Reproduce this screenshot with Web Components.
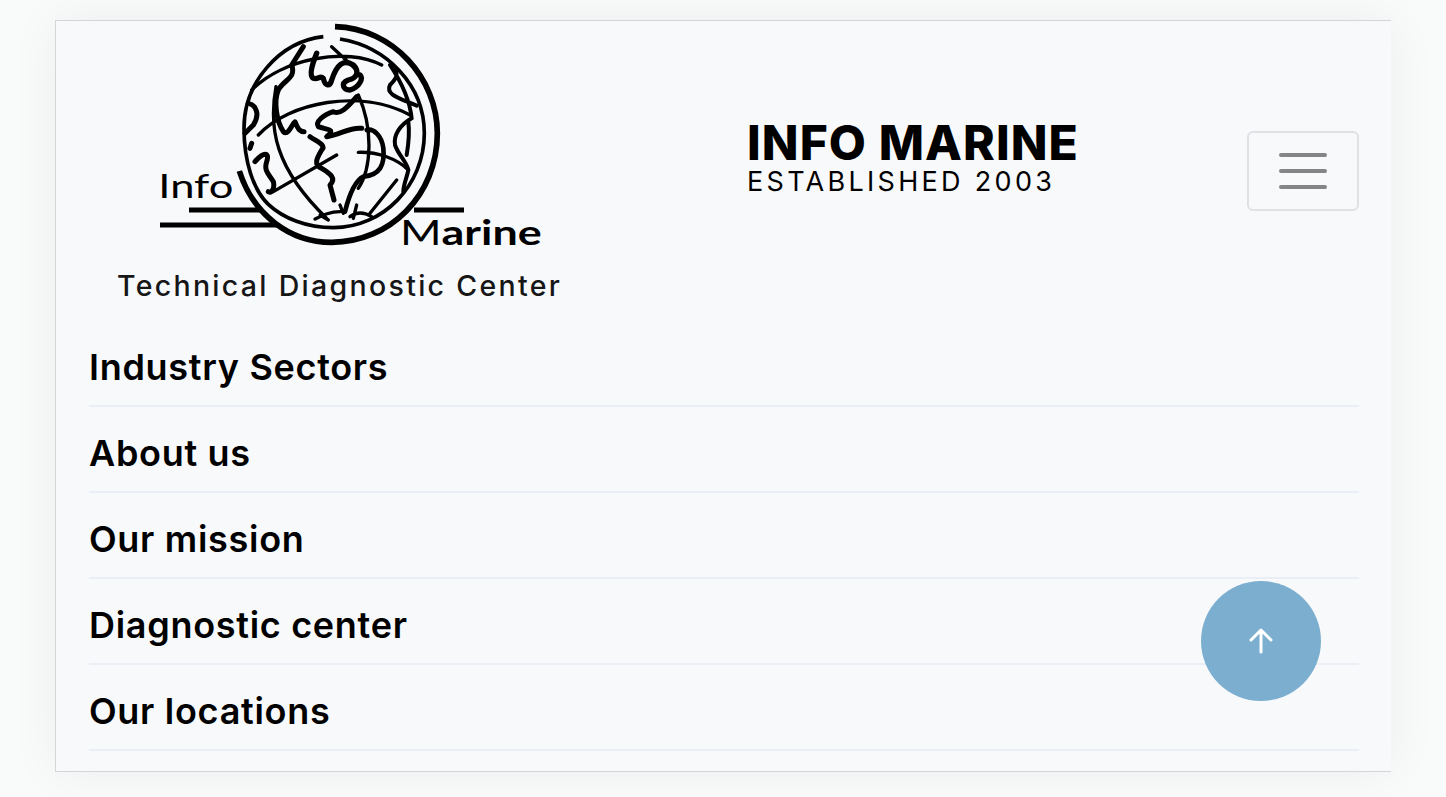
<!DOCTYPE html>
<html lang="en">
<head>
<meta charset="utf-8">
<title>Info Marine</title>
<style>
html,body{margin:0;height:797px;overflow:hidden;background:#f9fbfa;font-family:"Inter","Liberation Sans",sans-serif;color:#000}
</style>
</head>
<body>
<im-page>
  <im-header>
    <im-logo slot="logo">Technical Diagnostic Center</im-logo>
    <im-title slot="title" sub="ESTABLISHED 2003">INFO MARINE</im-title>
    <im-toggler slot="toggler"></im-toggler>
  </im-header>
  <im-nav-item>Industry Sectors</im-nav-item>
  <im-nav-item>About us</im-nav-item>
  <im-nav-item>Our mission</im-nav-item>
  <im-nav-item>Diagnostic center</im-nav-item>
  <im-nav-item>Our locations</im-nav-item>
  <im-scroll-top></im-scroll-top>
</im-page>
<script>
function def(name, html, init){
  customElements.define(name, class extends HTMLElement{
    constructor(){super();this.attachShadow({mode:'open'}).innerHTML=html;}
    connectedCallback(){ if(init) init(this); }
  });
}
def('im-page',`<style>
:host{display:block;position:relative;box-sizing:border-box;width:1336px;height:752px;margin:20px 0 0 55px;
background:#f8f9fb;border:1px solid #d3d5d6;border-right:0;padding:0 32px 0 33px;box-shadow:0 0 48px rgba(0,0,0,.055)}
</style><slot></slot>`);
def('im-header',`<style>
:host{display:grid;grid-template-columns:658px 1fr auto;height:300px;align-items:center}
.t{padding-bottom:24px}
</style><slot name="logo"></slot><div class="t"><slot name="title"></slot></div><slot name="toggler"></slot>`);
def('im-logo',`<style>
:host{display:flex;flex-direction:column;height:300px;align-items:flex-start}
svg{display:block;margin-left:51px;width:420px;height:240px;flex:none}
.cap{margin-left:28px;width:444px;font:500 28.5px/50px "Inter","Liberation Sans",sans-serif;letter-spacing:2.3px;color:#161616;white-space:nowrap}
text{font-family:"Lato","Liberation Sans",sans-serif;fill:#000}
</style>
<svg viewBox="0 18 1260 720" fill="none" stroke="#000" stroke-linecap="round" stroke-linejoin="round" aria-label="Info Marine logo">
  <path stroke-width="17" stroke-linecap="butt" d="M585 35C760 40 892 190 892 355C892 540 750 682 575 682C450 682 340 600 298 468"/>
  <path stroke-width="11" stroke-linecap="butt" d="M600 72C740 95 853 210 853 355C853 510 730 638 580 638C500 638 430 610 385 568C340 525 312 440 312 340C312 200 420 80 550 65"/>
  <path stroke-width="15" stroke-linecap="butt" d="M147 585H362M822 585H972M60 630H412"/>
  <path stroke-width="10" d="M335 225C430 130 620 95 725 150M355 360C450 260 660 220 810 300M400 530L590 420M655 412C710 410 770 430 805 465M408 215C385 340 405 460 560 610M655 240C700 340 695 460 655 520M770 495L690 595M575 95L650 165"/>
  <path stroke-width="15" d="M490 95L455 150C470 190 430 195 415 225C400 260 410 320 430 350C445 365 460 320 465 320C475 345 480 350 492 350"/>
  <path stroke-width="16" d="M530 115C520 140 505 180 520 190C535 195 540 180 550 190C555 215 570 215 575 195C590 150 610 130 640 150C660 170 650 190 625 195C600 205 610 225 630 225C660 215 670 190 660 180"/>
  <path stroke-width="15" d="M650 245C620 280 600 300 580 290C550 300 525 320 535 335C560 345 590 340 560 365C600 360 630 335 665 340"/>
  <path stroke-width="15" d="M510 365C530 380 560 390 545 405C530 430 520 450 545 460C570 475 590 490 570 510L582 555"/>
  <path stroke-width="14" d="M615 590C625 550 640 500 670 485C720 480 735 450 730 400C725 360 700 340 680 345"/>
  <path stroke-width="12" d="M755 150C780 175 770 190 750 210C735 240 780 250 830 272M750 150C790 210 810 260 815 310C780 330 760 360 765 390C775 420 800 440 805 465C800 490 790 510 790 530M805 320C810 360 805 390 800 420"/>
  <path stroke-width="15" d="M325 265C350 270 360 300 340 330C325 345 320 350 315 355M335 385L330 400M345 440C370 410 390 410 380 440C370 470 390 480 400 500C405 520 395 535 385 530"/>
  <path stroke-width="10" d="M525 612C550 600 570 590 600 590M600 570L610 595M630 605C650 590 670 590 695 605M540 600L565 615M650 570L640 610"/>
  <text x="55" y="550" font-size="100" stroke="none" textLength="225" lengthAdjust="spacingAndGlyphs">Info</text>
  <text x="780" y="690" stroke="none" textLength="425" lengthAdjust="spacingAndGlyphs" font-size="104">M<tspan font-weight="700">arine</tspan></text>
</svg>
<div class="cap"><slot></slot></div>`);
def('im-title',`<style>
:host{display:block;white-space:nowrap}
.m{font:800 48px/46px "Inter","Liberation Sans",sans-serif;letter-spacing:1.1px;color:#000}
.s{font:400 27px/32px "Inter","Liberation Sans",sans-serif;letter-spacing:3.3px;color:#000}
</style><div class="m"><slot></slot></div><div class="s" id="s"></div>`,
 el=>{el.shadowRoot.getElementById('s').textContent=el.getAttribute('sub');});
def('im-toggler',`<style>
:host{display:flex;box-sizing:border-box;width:112px;height:80px;border:2px solid #dfe1e4;border-radius:6px;align-items:center;justify-content:center}
svg{display:block}
</style><svg width="48" height="36" viewBox="0 0 48 36" aria-label="Toggle navigation"><path stroke="#858585" stroke-width="4" stroke-linecap="round" d="M2 2H46M2 18H46M2 34H46"/></svg>`);
def('im-nav-item',`<style>
:host{display:block;box-sizing:border-box;height:86px;border-bottom:2px solid #e9eff5;padding-top:24px;
font:600 36px/44px "Inter","Liberation Sans",sans-serif;letter-spacing:.7px;color:#000;white-space:nowrap}
</style><slot></slot>`);
def('im-scroll-top',`<style>
:host{position:absolute;left:1145px;top:560px;width:120px;height:120px;border-radius:50%;background:#7cafcf;display:flex;align-items:center;justify-content:center}
svg{display:block}
</style><svg width="24" height="26" viewBox="0 0 24 26" fill="none" stroke="#fff" stroke-width="3" stroke-linecap="round" stroke-linejoin="round" aria-label="Back to top"><path d="M12 2V24M2 12L12 2L22 12"/></svg>`);
</script>
</body>
</html>
